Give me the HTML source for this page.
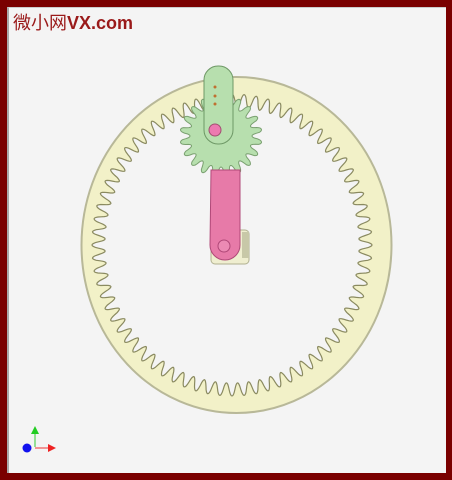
<!DOCTYPE html>
<html><head><style>
html,body{margin:0;padding:0;width:452px;height:480px;overflow:hidden;background:#7a0000}
#c{position:absolute;left:7px;top:7px;width:439px;height:466px;background:#f4f4f4;border-left:2px solid #aaa;border-top:1px solid #ccc;box-sizing:border-box}
#t{position:absolute;left:13px;top:9px;font:18px "Liberation Sans","Noto Sans CJK SC",sans-serif;color:#9a1a1a}
#t b{font-weight:bold}
svg{position:absolute;left:0;top:0}
</style></head><body>
<div id="c"></div>
<div id="t">微小网<b>VX.com</b></div>
<svg width="452" height="480" viewBox="0 0 452 480">
<ellipse cx="236.5" cy="245" rx="155" ry="168" fill="#f2f1c8" stroke="#b8b898" stroke-width="2"/>
<path id="ring" fill="#f4f4f4" stroke="#8a8a60" stroke-width="1.2"/>
<path id="pin" fill="#b7dfae" stroke="#7aa070" stroke-width="1"/>
<rect x="211" y="230" width="38" height="34" rx="4" fill="#efeed0" stroke="#b0b090"/>
<rect x="242" y="232" width="7" height="26" fill="#c8c8a8"/>
<path d="M211 170 L240 170 L240 245 A15 15 0 0 1 210 245 Z" fill="#e77aa8" stroke="#b04878"/>
<circle cx="224" cy="246" r="6" fill="#ec8ab4" stroke="#b04878"/>
<rect x="204" y="66" width="29" height="78" rx="14" fill="#b7dfae" stroke="#6e9866"/>
<circle cx="215" cy="87" r="1.5" fill="#c07030"/><circle cx="215" cy="96" r="1.5" fill="#c07030"/><circle cx="215" cy="104" r="1.5" fill="#c07030"/>
<circle cx="215" cy="130" r="6" fill="#ec7ab0" stroke="#a05070"/>
<line x1="35" y1="447" x2="35" y2="432" stroke="#3c3"/><polygon points="31,434 35,426 39,434" fill="#2c2"/>
<line x1="35" y1="448" x2="50" y2="448" stroke="#e33"/><polygon points="48,444 56,448 48,452" fill="#e22"/>
<circle cx="27" cy="448" r="4.5" fill="#11e"/>
</svg>
<script>
function gear(cx,cy,rxr,ryr,rxt,ryt,n,ph,sh){let d="",N=n*16;for(let i=0;i<=N;i++){let a=ph+i/N*2*Math.PI;let s=Math.cos(a*n);s=Math.sign(s)*Math.pow(Math.abs(s),sh);let t=(1-s)/2;let rx=rxr+(rxt-rxr)*t,ry=ryr+(ryt-ryr)*t;let x=cx+rx*Math.cos(a),y=cy+ry*Math.sin(a);d+=(i?"L":"M")+x.toFixed(1)+" "+y.toFixed(1)}return d+"Z"}
document.getElementById("ring").setAttribute("d",gear(232,245,140,151,127,138,72,0,0.8));
document.getElementById("pin").setAttribute("d",gear(221,136,31,31,41,41,20,0.1,0.6));
</script>
</body></html>
